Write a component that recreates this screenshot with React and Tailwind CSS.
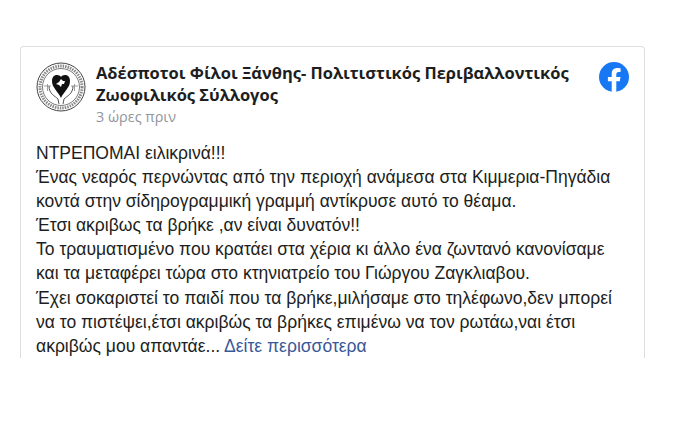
import React from 'react';

const lines = [
  'ΝΤΡΕΠΟΜΑΙ ειλικρινά!!!',
  'Ένας νεαρός περνώντας από την περιοχή ανάμεσα στα Κιμμερια-Πηγάδια',
  'κοντά στην σίδηρογραμμική γραμμή αντίκρυσε αυτό το θέαμα.',
  'Έτσι ακριβως τα βρήκε ,αν είναι δυνατόν!!',
  'Το τραυματισμένο που κρατάει στα χέρια κι άλλο ένα ζωντανό κανονίσαμε',
  'και τα μεταφέρει τώρα στο κτηνιατρείο του Γιώργου Ζαγκλιαβου.',
  'Έχει σοκαριστεί το παιδί που τα βρήκε,μιλήσαμε στο τηλέφωνο,δεν μπορεί',
  'να το πιστέψει,έτσι ακριβώς τα βρήκες επιμένω να τον ρωτάω,ναι έτσι'
];

// Στρογγυλό λογότυπο του συλλόγου
const Logo = () => (
  <svg viewBox="0 0 50 50" className="w-[50px] h-[50px] shrink-0">
    <circle cx="25" cy="25" r="24" fill="#fff" stroke="#444" strokeWidth="1" />
    <circle cx="25" cy="25" r="21" fill="none" stroke="#888" strokeWidth="3" strokeDasharray="1.5 1" />
    <circle cx="25" cy="25" r="18.5" fill="none" stroke="#444" strokeWidth="0.7" />
    <path d="M25 15c-2-3-9-3-9 4 0 7 6 10 9 17 3-7 9-10 9-17 0-7-7-7-9-4z" fill="#111" />
    <path d="M25 17l2 2 2 0-1 3-2 0-1 3-2-2-3-1 3-2z" fill="#fff" />
    <path d="M13 24c0 8 6 10 9 13l1 5M37 24c0 8-6 10-9 13l-1 5" fill="none" stroke="#555" strokeWidth="1" />
    <path d="M8 24h7M11.500 22v7M35 24h7M38.500 22v7" stroke="#888" strokeWidth="0.8" />
  </svg>
);

const FacebookIcon = () => (
  <svg viewBox="0 0 30 30" className="w-[30px] h-[30px] shrink-0">
    <circle cx="15" cy="15" r="15" fill="#1877f2" />
    <path
      d="M20.800 19.300l.7-4.300h-4.200v-2.800c0-1.200.6-2.300 2.400-2.300h1.900V6.200s-1.700-.3-3.300-.3c-3.400 0-5.600 2.100-5.600 5.800V15H8.900v4.300h3.800v10.500c.8.100 1.500.2 2.300.2s1.600-.1 2.300-.2V19.300z"
      fill="#fff"
    />
  </svg>
);

export default function App() {
  return (
    <div className="w-[686px] h-[426px] bg-white pt-[46px] pl-5 overflow-hidden font-['Liberation_Sans',sans-serif]">
      <div className="w-[625px] h-[312px] border-x border-t border-[#dddfe2] rounded-t-[4px] px-[15px] pt-[15px]">
        <div className="flex items-start">
          <Logo />
          <div className="ml-[10px] flex-1">
            <div className="font-['Open_Sans',sans-serif] font-bold text-[16.47px] leading-[22px] text-[#1c1e21]">
              Αδέσποτοι Φίλοι Ξάνθης- Πολιτιστικός Περιβαλλοντικός
              <br />
              Ζωοφιλικός Σύλλογος
            </div>
            <div className="font-['Open_Sans',sans-serif] text-[14.4px] leading-[19px] mt-px text-[#90949c]">3 ώρες πριν</div>
          </div>
          <FacebookIcon />
        </div>
        <div className="mt-[15px] text-[17.53px] leading-[24.1px] text-[#1c1e21]">
          {lines.map((line) => (
            <div key={line}>{line}</div>
          ))}
          <div>
            ακριβώς μου απαντάε... <span className="text-[#385898]">Δείτε περισσότερα</span>
          </div>
        </div>
      </div>
    </div>
  );
}
